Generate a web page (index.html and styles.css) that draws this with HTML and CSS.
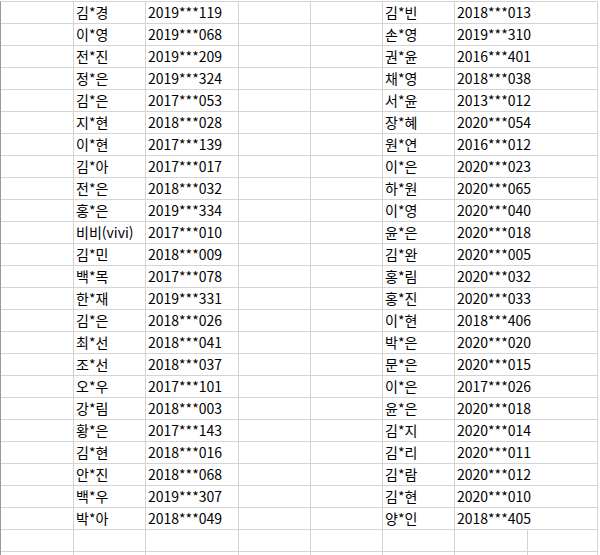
FILE: index.html
```html
<!DOCTYPE html>
<html lang="ko">
<head>
<meta charset="utf-8">
<title>Sheet</title>
<link rel="stylesheet" href="styles.css">
</head>
<body>
<div class="sheet">
<div class="cell"></div><div class="cell">김*경</div><div class="cell">2019***119</div><div class="cell"></div><div class="cell"></div><div class="cell">김*빈</div><div class="cell wide">2018***013</div>
<div class="cell"></div><div class="cell">이*영</div><div class="cell">2019***068</div><div class="cell"></div><div class="cell"></div><div class="cell">손*영</div><div class="cell wide">2019***310</div>
<div class="cell"></div><div class="cell">전*진</div><div class="cell">2019***209</div><div class="cell"></div><div class="cell"></div><div class="cell">권*윤</div><div class="cell wide">2016***401</div>
<div class="cell"></div><div class="cell">정*은</div><div class="cell">2019***324</div><div class="cell"></div><div class="cell"></div><div class="cell">채*영</div><div class="cell wide">2018***038</div>
<div class="cell"></div><div class="cell">김*은</div><div class="cell">2017***053</div><div class="cell"></div><div class="cell"></div><div class="cell">서*윤</div><div class="cell wide">2013***012</div>
<div class="cell"></div><div class="cell">지*현</div><div class="cell">2018***028</div><div class="cell"></div><div class="cell"></div><div class="cell">장*혜</div><div class="cell wide">2020***054</div>
<div class="cell"></div><div class="cell">이*현</div><div class="cell">2017***139</div><div class="cell"></div><div class="cell"></div><div class="cell">원*연</div><div class="cell wide">2016***012</div>
<div class="cell"></div><div class="cell">김*아</div><div class="cell">2017***017</div><div class="cell"></div><div class="cell"></div><div class="cell">이*은</div><div class="cell wide">2020***023</div>
<div class="cell"></div><div class="cell">전*은</div><div class="cell">2018***032</div><div class="cell"></div><div class="cell"></div><div class="cell">하*원</div><div class="cell wide">2020***065</div>
<div class="cell"></div><div class="cell">홍*은</div><div class="cell">2019***334</div><div class="cell"></div><div class="cell"></div><div class="cell">이*영</div><div class="cell wide">2020***040</div>
<div class="cell"></div><div class="cell">비비(vivi)</div><div class="cell">2017***010</div><div class="cell"></div><div class="cell"></div><div class="cell">윤*은</div><div class="cell wide">2020***018</div>
<div class="cell"></div><div class="cell">김*민</div><div class="cell">2018***009</div><div class="cell"></div><div class="cell"></div><div class="cell">김*완</div><div class="cell wide">2020***005</div>
<div class="cell"></div><div class="cell">백*목</div><div class="cell">2017***078</div><div class="cell"></div><div class="cell"></div><div class="cell">홍*림</div><div class="cell wide">2020***032</div>
<div class="cell"></div><div class="cell">한*재</div><div class="cell">2019***331</div><div class="cell"></div><div class="cell"></div><div class="cell">홍*진</div><div class="cell wide">2020***033</div>
<div class="cell"></div><div class="cell">김*은</div><div class="cell">2018***026</div><div class="cell"></div><div class="cell"></div><div class="cell">이*현</div><div class="cell wide">2018***406</div>
<div class="cell"></div><div class="cell">최*선</div><div class="cell">2018***041</div><div class="cell"></div><div class="cell"></div><div class="cell">박*은</div><div class="cell wide">2020***020</div>
<div class="cell"></div><div class="cell">조*선</div><div class="cell">2018***037</div><div class="cell"></div><div class="cell"></div><div class="cell">문*은</div><div class="cell wide">2020***015</div>
<div class="cell"></div><div class="cell">오*우</div><div class="cell">2017***101</div><div class="cell"></div><div class="cell"></div><div class="cell">이*은</div><div class="cell wide">2017***026</div>
<div class="cell"></div><div class="cell">강*림</div><div class="cell">2018***003</div><div class="cell"></div><div class="cell"></div><div class="cell">윤*은</div><div class="cell wide">2020***018</div>
<div class="cell"></div><div class="cell">황*은</div><div class="cell">2017***143</div><div class="cell"></div><div class="cell"></div><div class="cell">김*지</div><div class="cell wide">2020***014</div>
<div class="cell"></div><div class="cell">김*현</div><div class="cell">2018***016</div><div class="cell"></div><div class="cell"></div><div class="cell">김*리</div><div class="cell wide">2020***011</div>
<div class="cell"></div><div class="cell">안*진</div><div class="cell">2018***068</div><div class="cell"></div><div class="cell"></div><div class="cell">김*람</div><div class="cell wide">2020***012</div>
<div class="cell"></div><div class="cell">백*우</div><div class="cell">2019***307</div><div class="cell"></div><div class="cell"></div><div class="cell">김*현</div><div class="cell wide">2020***010</div>
<div class="cell"></div><div class="cell">박*아</div><div class="cell">2018***049</div><div class="cell"></div><div class="cell"></div><div class="cell">양*인</div><div class="cell wide">2018***405</div>
<div class="cell"></div><div class="cell"></div><div class="cell"></div><div class="cell"></div><div class="cell"></div><div class="cell"></div><div class="cell"></div><div class="cell"></div>
<div class="cell"></div><div class="cell"></div><div class="cell"></div><div class="cell"></div><div class="cell"></div><div class="cell"></div><div class="cell"></div><div class="cell"></div>
</div>
</body>
</html>
```
FILE: styles.css
```css
html, body {
  margin: 0;
  padding: 0;
  background: #ffffff;
}
body {
  width: 600px;
  height: 555px;
  overflow: hidden;
}
.sheet {
  margin-top: 1px;
  display: grid;
  grid-template-columns: 73px 72px 93px 72px 72px 72px 73px 70px;
  grid-auto-rows: 22px;
  border-top: 1px solid #d4d4d4;
  border-left: 1px solid #9a9a9a;
  width: max-content;
}
.cell {
  box-sizing: border-box;
  border-right: 1px solid #d4d4d4;
  border-bottom: 1px solid #d4d4d4;
  padding-left: 2px;
  font-family: "Noto Sans CJK KR", "Noto Sans", sans-serif;
  font-size: 14px;
  line-height: 21px;
  color: #000000;
  white-space: nowrap;
  overflow: visible;
}
.wide {
  grid-column: span 2;
}
```
